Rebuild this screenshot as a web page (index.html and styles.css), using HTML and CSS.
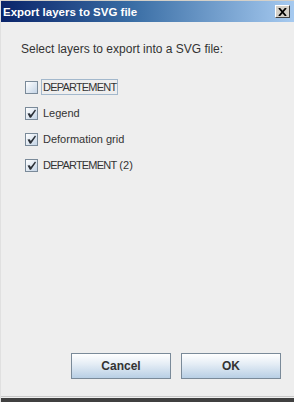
FILE: index.html
```html
<!DOCTYPE html>
<html lang="en">
<head>
    <meta charset="UTF-8">
    <title>Export layers to SVG file</title>
    <link rel="stylesheet" href="styles.css">
</head>
<body>

<div class="window">
    <div class="titlebar">
        <span class="title">Export layers to SVG file</span>
        <span class="close">
            <svg width="9" height="8" viewBox="0 0 9 8">
                <path d="M1 0 L8 8 M8 0 L1 8" stroke="#000" stroke-width="1.8"/>
            </svg>
        </span>
    </div>

    <div class="content">
        <p class="intro">Select layers to export into a SVG file:</p>

        <ul class="layers">
            <li class="layer">
                <span class="box"></span>
                <span class="name focused"><span class="caps">DEPARTEMENT</span></span>
            </li>
            <li class="layer">
                <span class="box checked">
                    <svg width="11" height="11" viewBox="0 0 11 11">
                        <path d="M1.5 5.5 L3.8 5.2 L4.8 7 L9 1.5 L10 2.6 L5 9.8 L3.8 9.8 Z" fill="#2a2f36"/>
                    </svg>
                </span>
                <span class="name">Legend</span>
            </li>
            <li class="layer">
                <span class="box checked">
                    <svg width="11" height="11" viewBox="0 0 11 11">
                        <path d="M1.5 5.5 L3.8 5.2 L4.8 7 L9 1.5 L10 2.6 L5 9.8 L3.8 9.8 Z" fill="#2a2f36"/>
                    </svg>
                </span>
                <span class="name">Deformation grid</span>
            </li>
            <li class="layer">
                <span class="box checked">
                    <svg width="11" height="11" viewBox="0 0 11 11">
                        <path d="M1.5 5.5 L3.8 5.2 L4.8 7 L9 1.5 L10 2.6 L5 9.8 L3.8 9.8 Z" fill="#2a2f36"/>
                    </svg>
                </span>
                <span class="name"><span class="caps">DEPARTEMENT</span> (2)</span>
            </li>
        </ul>
    </div>

    <div class="buttons">
        <button type="button">Cancel</button>
        <button type="button">OK</button>
    </div>

    <div class="taskbar"></div>
</div>

</body>
</html>
```

FILE: styles.css
```css
body {
    margin: 0;
    font-family: "Liberation Sans", Arial, sans-serif;
    background-color: #eeeeee;
}
.window {
    width: 294px;
    height: 402px;
    display: flex;
    flex-direction: column;
    background-color: #eeeeee;
    border-left: 1px solid #e0e0e0;
    box-sizing: border-box;
}
.titlebar {
    height: 22px;
    display: flex;
    align-items: center;
    justify-content: space-between;
    padding: 0 4px 0 2px;
    background: linear-gradient(to right, #0a246a, #3a6ea5 45%, #a6caf0);
    border-top: 1px solid #d4d0c8;
    box-sizing: border-box;
}
.title {
    color: #ffffff;
    font-size: 11.5px;
    font-weight: bold;
}
.close {
    width: 15px;
    height: 13px;
    display: flex;
    align-items: center;
    justify-content: center;
    background-color: #d4d0c8;
    border: 1px solid;
    border-color: #ffffff #404040 #404040 #ffffff;
    box-sizing: border-box;
}
.content {
    flex: 1;
    padding: 20px 20px 0;
}
.intro {
    margin: 0;
    font-size: 12px;
    line-height: 14px;
    color: #333333;
}
.layers {
    list-style: none;
    margin: 23px 0 0;
    padding: 0 0 0 4px;
    display: flex;
    flex-direction: column;
    gap: 10px;
}
.layer {
    height: 16px;
    display: flex;
    align-items: center;
    gap: 3px;
}
.box {
    width: 13px;
    height: 13px;
    display: flex;
    align-items: center;
    justify-content: center;
    border: 1px solid #7a8a99;
    background: linear-gradient(to bottom right, #ffffff, #c4d4e6);
    box-sizing: border-box;
}
.name {
    font-size: 11px;
    line-height: 14px;
    color: #333333;
    padding: 0 1px;
    border: 1px solid transparent;
}
.caps {
    letter-spacing: -0.8px;
}
.name.focused {
    border-color: #a3b8cc;
}
.buttons {
    display: flex;
    justify-content: flex-end;
    gap: 10px;
    padding: 0 13px 17px;
}
button {
    width: 100px;
    height: 26px;
    font-family: "Liberation Sans", Arial, sans-serif;
    font-size: 12px;
    font-weight: bold;
    color: #333333;
    border: 1px solid #7a8a99;
    background: linear-gradient(to bottom, #ffffff, #e6eef6 40%, #b8cfe5);
    cursor: pointer;
}
.taskbar {
    height: 6px;
    border-top: 1px solid #c8c8c8;
    background: linear-gradient(to bottom, #eeeeee 0 1px, #404040 1px);
    box-sizing: border-box;
}
```
